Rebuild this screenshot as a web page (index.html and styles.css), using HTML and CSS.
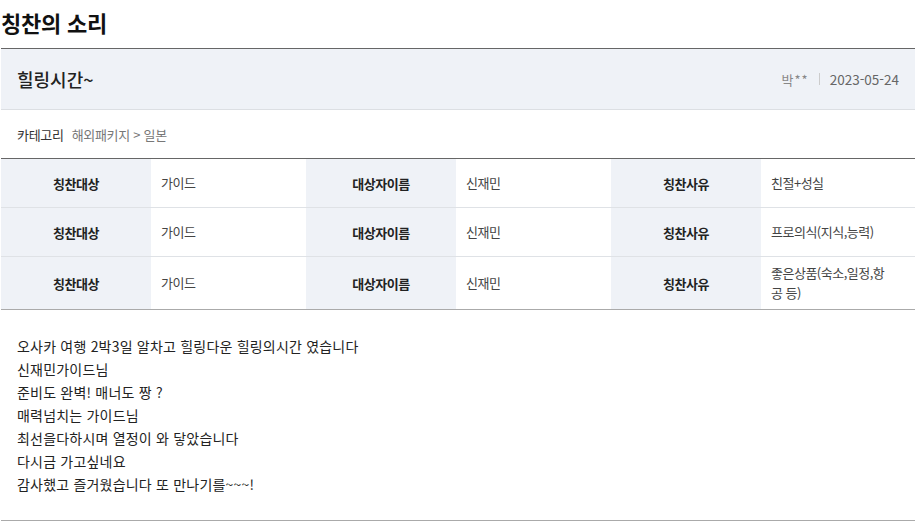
FILE: index.html
```html
<!DOCTYPE html>
<html lang="ko">
<head>
<meta charset="utf-8">
<title>칭찬의 소리</title>
<link rel="stylesheet" href="styles.css">
</head>
<body>
<div class="wrap">
  <h1 class="page-title">칭찬의 소리</h1>
  <div class="view-head">
    <h2 class="view-title">힐링시간~</h2>
    <div class="view-meta">
      <span class="writer">박**</span>
      <span class="sep"></span>
      <span class="date">2023-05-24</span>
    </div>
  </div>
  <div class="view-cate">
    <span class="cate-label">카테고리</span>
    <span class="cate-value">해외패키지 &gt; 일본</span>
  </div>
  <table class="info">
    <colgroup>
      <col class="c-th"><col class="c-td"><col class="c-th"><col class="c-td"><col class="c-th"><col>
    </colgroup>
    <tbody>
      <tr>
        <th>칭찬대상</th><td>가이드</td>
        <th>대상자이름</th><td>신재민</td>
        <th>칭찬사유</th><td>친절+성실</td>
      </tr>
      <tr>
        <th>칭찬대상</th><td>가이드</td>
        <th>대상자이름</th><td>신재민</td>
        <th>칭찬사유</th><td>프로의식(지식,능력)</td>
      </tr>
      <tr class="tall">
        <th>칭찬대상</th><td>가이드</td>
        <th>대상자이름</th><td>신재민</td>
        <th>칭찬사유</th><td class="wrap-cell">좋은상품(숙소,일정,항공 등)</td>
      </tr>
    </tbody>
  </table>
  <div class="view-body">
    <p>오사카 여행 2박3일 알차고 힐링다운 힐링의시간 였습니다</p>
    <p>신재민가이드님</p>
    <p>준비도 완벽! 매너도 짱 ?</p>
    <p>매력넘치는 가이드님</p>
    <p>최선을다하시며 열정이 와 닿았습니다</p>
    <p>다시금 가고싶네요</p>
    <p>감사했고 즐거웠습니다 또 만나기를~~~!</p>
  </div>
</div>
</body>
</html>
```

FILE: styles.css
```css
* { box-sizing: border-box; }
html, body { margin: 0; padding: 0; background: #fff; }
body {
  font-family: "Noto Sans CJK KR", "Noto Sans", sans-serif;
  color: #333;
}
.wrap {
  width: 915px;
  padding-left: 1px;
}
.page-title {
  margin: 0;
  height: 48px;
  line-height: 44px;
  font-size: 22px;
  font-weight: 700;
  color: #111;
  letter-spacing: -0.2px;
}
.view-head {
  display: flex;
  align-items: center;
  justify-content: space-between;
  height: 62px;
  padding: 0 16px;
  background: #eff2f7;
  border-top: 1px solid #666;
  border-bottom: 1px solid #dcdfe3;
}
.view-title {
  margin: 0;
  font-size: 18px;
  font-weight: 500;
  color: #222;
  letter-spacing: 0;
}
.view-meta {
  display: flex;
  align-items: center;
  gap: 10px;
  font-size: 13px;
  color: #888;
}
.view-meta .writer { letter-spacing: 1px; }
.view-meta .sep {
  width: 1px;
  height: 12px;
  background: #ccc;
}
.view-meta .date { color: #666; font-size: 13.5px; }
.view-cate {
  display: flex;
  align-items: center;
  gap: 8px;
  height: 48px;
  padding: 0 16px;
  font-size: 13px;
  letter-spacing: -0.3px;
}
.cate-label { color: #333; }
.cate-value { color: #777; }
.info {
  width: 914px;
  border-collapse: collapse;
  table-layout: fixed;
  border-top: 1px solid #666;
  border-bottom: 1px solid #aaa;
  font-size: 13px;
  letter-spacing: -0.5px;
}
.c-th { width: 150px; }
.c-td { width: 155px; }
.info th, .info td {
  height: 49px;
  padding: 0 10px;
  border-bottom: 1px solid #dfe2e6;
  vertical-align: middle;
}
.info tr:last-child th, .info tr:last-child td { border-bottom: 1px solid #aaa; }
.info tr.tall th, .info tr.tall td { height: 53px; }
.info th {
  background: #eff2f7;
  font-weight: 700;
  color: #222;
  text-align: center;
}
.info td {
  color: #444;
  text-align: left;
  line-height: 20px;
}
.info td.wrap-cell { padding-right: 22px; }
.view-body {
  padding: 25px 16px 24px;
  border-bottom: 1px solid #aaa;
  font-size: 14px;
  line-height: 23px;
  color: #222;
  letter-spacing: 0.2px;
}
.view-body p { margin: 0; }
```
